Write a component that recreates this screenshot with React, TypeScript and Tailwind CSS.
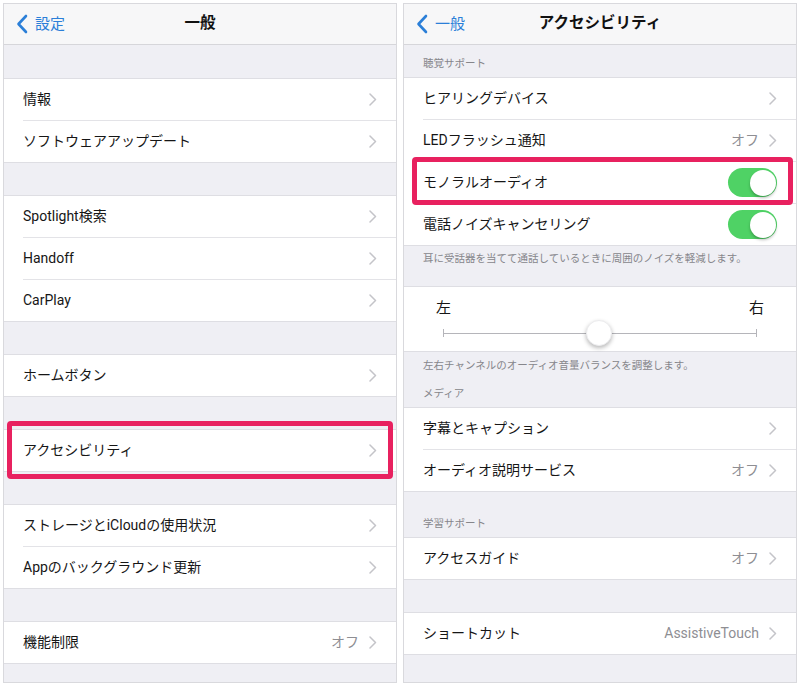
import type { ReactNode } from 'react';

const FONT = { fontFamily: 'Roboto, "Noto Sans CJK JP", sans-serif' };

function Chevron() {
  return (
    <svg width="8" height="13" viewBox="0 0 8 13" className="shrink-0">
      <polyline points="1,1 6.5,6.5 1,12" fill="none" stroke="#c4c4c9" strokeWidth="1.5" strokeLinecap="round" strokeLinejoin="round" />
    </svg>
  );
}

function Toggle() {
  return (
    <div className="w-[49px] h-[29px] rounded-full bg-[#4fd265] relative shrink-0">
      <div className="absolute right-[1.5px] top-[1.5px] w-[26px] h-[26px] rounded-full bg-white shadow-[0_2px_3px_rgba(0,0,0,0.25)]" />
    </div>
  );
}

function NavBar({ back, title }: { back: string; title: string }) {
  return (
    <div className="h-[41px] bg-[#f7f7f8] border-b border-[#d6d6da] relative flex items-center justify-center shrink-0">
      <div className="absolute left-[12px] top-0 h-full flex items-center gap-[7px] text-[#2b7fd8]">
        <svg width="12" height="20" viewBox="0 0 12 20">
          <polyline points="10,2 2.5,10 10,18" fill="none" stroke="#2b7fd8" strokeWidth="2.6" strokeLinecap="round" strokeLinejoin="round" />
        </svg>
        <span className="text-[15px]">{back}</span>
      </div>
      <span className="text-[15.5px] font-bold text-[#111]">{title}</span>
    </div>
  );
}

function Gap({ h, children, className = '' }: { h: number; children?: ReactNode; className?: string }) {
  return (
    <div className={`shrink-0 flex flex-col px-[19px] text-[10.5px] text-[#86868b] ${className}`} style={{ height: h }}>
      {children}
    </div>
  );
}

type Row = { label: string; value?: string; toggle?: boolean; chevron?: boolean };

function Group({ rows }: { rows: Row[] }) {
  return (
    <div className="bg-white border-y border-[#dedee3] shrink-0">
      {rows.map((r, i) => (
        <div key={r.label} className="pl-[19px]">
          <div
            className={`h-[41px] flex items-center justify-between pr-[19px] ${
              i < rows.length - 1 ? 'border-b border-[#e3e3e7] box-content' : ''
            }`}>
            <span className="text-[14px] text-[#161616]">{r.label}</span>
            <div className="flex items-center gap-[10px]">
              {r.value && <span className="text-[14px] text-[#8e8e93]">{r.value}</span>}
              {r.toggle ? <Toggle /> : <Chevron />}
            </div>
          </div>
        </div>
      ))}
    </div>
  );
}

function Panel({ children }: { children: ReactNode }) {
  return (
    <div className="w-[394px] h-[680px] border border-[#d9d9dd] bg-[#efeff4] flex flex-col relative overflow-hidden">
      {children}
    </div>
  );
}

export default function App() {
  return (
    <div className="w-[800px] h-[686px] bg-white flex gap-[6px] p-[3px]" style={FONT}>
      <Panel>
        <NavBar back="設定" title="一般" />
        <Gap h={33} />
        <Group rows={[{ label: '情報' }, { label: 'ソフトウェアアップデート' }]} />
        <Gap h={32} />
        <Group rows={[{ label: 'Spotlight検索' }, { label: 'Handoff' }, { label: 'CarPlay' }]} />
        <Gap h={32} />
        <Group rows={[{ label: 'ホームボタン' }]} />
        <Gap h={32} />
        <Group rows={[{ label: 'アクセシビリティ' }]} />
        <Gap h={32} />
        <Group rows={[{ label: 'ストレージとiCloudの使用状況' }, { label: 'Appのバックグラウンド更新' }]} />
        <Gap h={32} />
        <Group rows={[{ label: '機能制限', value: 'オフ' }]} />
        <div className="absolute left-[3px] top-[417px] w-[386px] h-[58px] border-[5px] border-[#e8215f] rounded-[4px]" />
      </Panel>

      <Panel>
        <NavBar back="一般" title="アクセシビリティ" />
        <Gap h={32} className="justify-end pb-[5px]">
          <span>聴覚サポート</span>
        </Gap>
        <Group
          rows={[
            { label: 'ヒアリングデバイス' },
            { label: 'LEDフラッシュ通知', value: 'オフ' },
            { label: 'モノラルオーディオ', toggle: true },
            { label: '電話ノイズキャンセリング', toggle: true },
          ]}
        />
        <Gap h={40} className="pt-[5px]">
          <span>耳に受話器を当てて通話しているときに周囲のノイズを軽減します。</span>
        </Gap>
        <div className="bg-white border-y border-[#dedee3] h-[66px] shrink-0 px-[32px] pt-[10px]">
          <div className="flex justify-between text-[15px] text-[#161616] leading-[22px]">
            <span>左</span>
            <span>右</span>
          </div>
          <div className="relative h-[26px] mt-[1px] mx-[7px] flex items-center">
            <div className="w-full h-[1px] bg-[#b5b5ba]" />
            <div className="absolute left-0 top-[9px] w-[1px] h-[8px] bg-[#b5b5ba]" />
            <div className="absolute right-0 top-[9px] w-[1px] h-[8px] bg-[#b5b5ba]" />
            <div className="absolute left-[143px] top-0 w-[26px] h-[26px] rounded-full bg-white shadow-[0_2px_4px_rgba(0,0,0,0.28)] border border-[#ececee]" />
          </div>
        </div>
        <Gap h={55} className="justify-between pt-[6px] pb-[5px]">
          <span>左右チャンネルのオーディオ音量バランスを調整します。</span>
          <span>メディア</span>
        </Gap>
        <Group rows={[{ label: '字幕とキャプション' }, { label: 'オーディオ説明サービス', value: 'オフ' }]} />
        <Gap h={45} className="justify-end pb-[5px]">
          <span>学習サポート</span>
        </Gap>
        <Group rows={[{ label: 'アクセスガイド', value: 'オフ' }]} />
        <Gap h={32} />
        <Group rows={[{ label: 'ショートカット', value: 'AssistiveTouch' }]} />
        <div className="absolute left-[8px] top-[153px] w-[381px] h-[48px] border-[5px] border-[#e8215f] rounded-[4px]" />
      </Panel>
    </div>
  );
}
